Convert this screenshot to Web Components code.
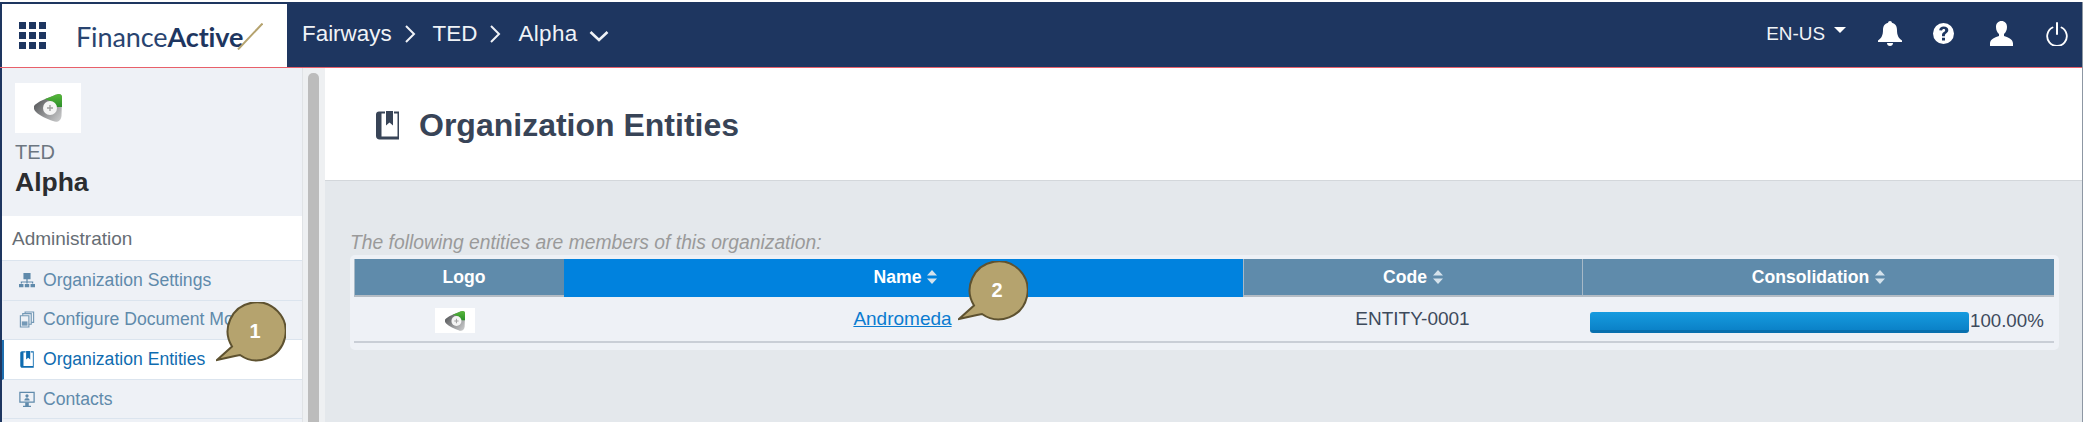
<!DOCTYPE html>
<html lang="en">
<head>
<meta charset="utf-8">
<title>Organization Entities</title>
<style>
    html, body { margin: 0; padding: 0; height: 422px; overflow: hidden; background: #fff; }
    body { font-family: "Liberation Sans", Arial, sans-serif; }
</style>
</head>
<body>
<fa-app></fa-app>
<script>
// builds an open shadow root from a style + markup string
function shadow(el, css, html) {
    el.attachShadow({ mode: 'open' });
    el.shadowRoot.innerHTML = `<style>${css}</style>${html}`;
}

const ICONS = {
    book: `<svg viewBox="0 0 23 29" width="100%" height="100%"><path fill="currentColor" d="M3 .5h6v2H5.500v23H21.500V2.500H18V.5h5v28H3.500C1.500 28.500 0 27 0 25V3.500C0 1.800 1.300.5 3 .5z"/><path fill="currentColor" d="M10 0h7v14.500l-3.500-3-3.500 3z"/></svg>`,
    sitemap: `<svg viewBox="0 0 18 17" width="100%" height="100%"><path fill="currentColor" d="M5 0h8v7H5zM8.300 7h1.400v2.500H16V12h-1.400v-1.200H9.700V12H8.300v-1.200H3.400V12H2V9.500h6.300zM0 12.500h5V16H0zM6.500 12.500h5V16h-5zM13 12.500h5V16h-5z"/></svg>`,
    copies: `<svg viewBox="0 0 16 18" width="100%" height="100%"><g fill="none" stroke="currentColor" stroke-width="1.200" opacity=".85"><path d="M1 5h9v12H1z"/><path d="M3.500 5V2.800h9V14H10"/><path d="M6 2.800V1h9v11h-2.500"/></g><path fill="currentColor" opacity=".85" d="M2.500 11h6v4.500h-6z"/></svg>`,
    screen: `<svg viewBox="0 0 18 18" width="100%" height="100%"><path fill="none" stroke="currentColor" stroke-width="1.400" d="M1 1h16v11H1z"/><path fill="currentColor" d="M7 16h4v-3.500H7zM4.500 16h9v1.500h-9zM6 10c0-2 1.200-2.500 3-2.500s3 .5 3 2.500zM9 3c1.100 0 1.800.8 1.800 1.900S10.100 7 9 7s-1.800-1-1.800-2.100S7.900 3 9 3z"/></svg>`
};

class FaLogoMark extends HTMLElement {
    constructor() {
        super();
        const id = 'g' + Math.random().toString(36).slice(2, 7);
        shadow(this, `
            :host { display: flex; align-items: center; justify-content: center; background: #fff; }
            svg { width: var(--mark, 28px); height: var(--mark, 28px); display: block; }
        `, `
            <svg viewBox="0 0 28 28">
                <defs>
                    <linearGradient id="${id}a" x1="0" y1="0" x2="0" y2="1"><stop offset="0" stop-color="#57b83a"/><stop offset="1" stop-color="#2d8f2b"/></linearGradient>
                    <linearGradient id="${id}b" x1="0" y1=".3" x2=".9" y2="1"><stop offset="0" stop-color="#555759"/><stop offset=".55" stop-color="#98999b"/><stop offset="1" stop-color="#c8c9ca"/></linearGradient>
                </defs>
                <path fill="url(#${id}b)" d="M25 0C28 0 28.500 3 28 6L27.500 22C27 27 23 29 19 27 13 25 6 22 2 18-1 15-1 12 2 10 7 6 14 4 20 1.500 22 .5 24 0 25 0z"/>
                <path fill="url(#${id}a)" d="M25 0C28 0 28.500 3 28 6V13H23C22 9 17 6.500 10.500 5.300 14 4 17 3 20 1.500 22 .5 24 0 25 0z"/>
                <circle cx="16" cy="14" r="7" fill="#f4f4f4"/>
                <path fill="#a0a0a0" d="M15.300 11h1.400v2.300H19v1.400h-2.300V17h-1.400v-2.300H13v-1.400h2.300z"/>
            </svg>
        `);
    }
}

class FaTopbar extends HTMLElement {
    constructor() {
        super();
        shadow(this, `
            :host { display: flex; height: 65px; background: #1e3660; border-bottom: 1px solid #e8606a; color: #f0f3f7; box-sizing: content-box; }
            .brand { width: 285px; margin: 2px 0 0 2px; background: #fff; display: flex; align-items: center; flex: none; padding-left: 17px; box-sizing: border-box; }
            .apps { display: grid; grid-template-columns: repeat(3, 7px); grid-auto-rows: 7px; gap: 3px; margin-right: 30px; }
            .apps i { background: #1e3660; }
            .word { position: relative; font: 400 27px "Lato", sans-serif; color: #294470; letter-spacing: -.1px; margin-top: 1px; }
            .word b { font-weight: 700; color: #1e3660; }
            .word svg { position: absolute; left: 161px; top: 3px; width: 26px; height: 27px; }
            .crumbs { display: flex; align-items: center; font-size: 22.400px; margin-left: 15px; flex: 1; padding-bottom: 2px; }
            .crumbs svg { display: block; }
            .sep { margin: 0 17px 0 12px; }
            .tools { display: flex; align-items: center; margin-right: 14px; padding-bottom: 2px; }
            .lang { font-size: 18.900px; margin-right: 9px; }
            .tools svg { display: block; fill: #fff; }
        `, `
            <div class="brand">
                <div class="apps"><i></i><i></i><i></i><i></i><i></i><i></i><i></i><i></i><i></i></div>
                <div class="word">Finance<b>Active</b><svg viewBox="0 0 26 27"><path d="M1 26.500L25.500.5" stroke="#b5a36e" stroke-width="2" fill="none"/></svg></div>
            </div>
            <nav class="crumbs">
                <span>Fairways</span>
                <svg class="sep" width="12" height="18" viewBox="0 0 12 18"><path d="M2 1l8 8-8 8" fill="none" stroke="#f0f3f7" stroke-width="2"/></svg>
                <span>TED</span>
                <svg class="sep" width="12" height="18" viewBox="0 0 12 18"><path d="M2 1l8 8-8 8" fill="none" stroke="#f0f3f7" stroke-width="2"/></svg>
                <span style="letter-spacing:.4px">Alpha</span>
                <svg style="margin:4px 0 0 11px" width="20" height="12" viewBox="0 0 20 12"><path d="M1.500 2L10 10l8.500-8" fill="none" stroke="#f0f3f7" stroke-width="2.600"/></svg>
            </nav>
            <div class="tools">
                <span class="lang">EN-US</span>
                <svg style="margin:-7px 32px 0 0" width="12" height="6" viewBox="0 0 12 6"><path d="M0 0h12L6 6z"/></svg>
                <svg style="margin-right:31px" width="24" height="25" viewBox="0 0 24 25"><path d="M12 0c1.100 0 1.900.8 1.900 1.800 3.500.8 5.100 3.700 5.100 7.200 0 5 1.300 8 5 10.500v1.500H0v-1.500C3.700 17 5 14 5 9c0-3.500 1.600-6.400 5.100-7.200C10.100.8 10.900 0 12 0zM9 22h6c0 1.700-1.300 3-3 3s-3-1.300-3-3z"/></svg>
                <svg style="margin-right:36px" width="21" height="21" viewBox="0 0 21 21"><path fill-rule="evenodd" d="M10.500 0a10.500 10.500 0 1 1 0 21 10.500 10.500 0 0 1 0-21zM9 14.700v2.800h3v-2.800zM10.700 3.500c-2.600 0-4.200 1.200-4.500 3.700l2.800.4c.2-1.200.8-1.700 1.700-1.700.9 0 1.500.5 1.500 1.300 0 .7-.4 1.100-1.200 1.700C9.700 9.600 9 10.500 9 12.300v1h2.900v-.7c0-.9.300-1.300 1.200-2 1.200-.9 2.200-1.800 2.200-3.500 0-2.300-1.900-3.600-4.600-3.600z"/></svg>
                <svg style="margin-right:33px" width="23" height="25" viewBox="0 0 23 25"><path d="M11.500 0c3.300 0 5.500 2.500 5.500 6 0 3-1.200 5.500-3 7v2c3.500 1 9 3 9 7.500V25H0v-2.500C0 18 5.500 16 9 15v-2c-1.800-1.500-3-4-3-7 0-3.500 2.200-6 5.500-6z"/></svg>
                <svg width="22" height="24" viewBox="0 0 22 24"><path d="M11 1v11" fill="none" stroke="#fff" stroke-width="2" stroke-linecap="round"/><path d="M6.500 5.500a9.800 9.800 0 1 0 9 0" fill="none" stroke="#fff" stroke-width="1.800" stroke-linecap="round"/></svg>
            </div>
        `);
    }
}

class FaNavItem extends HTMLElement {
    static get observedAttributes() { return ['icon']; }
    constructor() {
        super();
        shadow(this, `
            :host { display: flex; align-items: center; height: 38.600px; border-bottom: 1px solid #dbe4ee; color: #5f8aab; font-size: 17.600px; white-space: nowrap; overflow: hidden; box-sizing: content-box; border-left: 2px solid transparent; }
            :host([active]) { background: #fff; color: #0f6cb0; border-left-color: #1f6fb0; }
            .ico { width: 16px; height: 17px; margin: 0 8px 0 15px; flex: none; }
        `, `<span class="ico"></span><slot></slot>`);
    }
    attributeChangedCallback(name, old, value) {
        this.shadowRoot.querySelector('.ico').innerHTML = ICONS[value] || '';
    }
}

class FaSidebar extends HTMLElement {
    constructor() {
        super();
        shadow(this, `
            :host { display: block; width: 300px; background: #eef1f6; flex: none; overflow: hidden; }
            fa-logo-mark { width: 66px; height: 50px; margin: 15px 0 0 13px; }
            .org { margin: 8px 0 18px 13px; }
            .ted { font-size: 20px; line-height: 23px; color: #6c7680; }
            .alpha { font-size: 26.500px; line-height: 34px; font-weight: 700; color: #2b2d30; padding-top: 1px; margin-bottom: -1px; }
            .section { height: 44px; background: #fff; border-bottom: 1px solid #dbe4ee; line-height: 45px; font-size: 19px; padding-left: 10px; color: #666d74; }
        `, `
            <fa-logo-mark></fa-logo-mark>
            <div class="org"><div class="ted">TED</div><div class="alpha">Alpha</div></div>
            <div class="section">Administration</div>
            <slot></slot>
        `);
    }
}

class FaScrollbar extends HTMLElement {
    constructor() {
        super();
        shadow(this, `
            :host { display: block; width: 23px; flex: none; background: #eef0f2; padding: 5px 7px 0 5px; box-sizing: border-box; border-left: 1px solid #e0e3e6; }
            .thumb { width: 11px; height: 100%; background: #bcbcbc; border-radius: 5px 5px 0 0; }
        `, `<div class="thumb"></div>`);
    }
}

class FaPageHeader extends HTMLElement {
    constructor() {
        super();
        shadow(this, `
            :host { display: flex; align-items: center; height: 112px; background: #fff; border-bottom: 1px solid #d3d7db; padding-left: 51px; color: #384457; }
            .ico { width: 23px; height: 29px; margin-right: 20px; margin-top: 2px; }
            h1 { margin: 2px 0 0; font-size: 32px; font-weight: 700; line-height: 38px; }
        `, `<span class="ico">${ICONS.book}</span><h1><slot></slot></h1>`);
    }
}

class FaSortHead extends HTMLElement {
    constructor() {
        super();
        shadow(this, `
            :host { display: flex; align-items: center; justify-content: center; gap: 6px; background: #5f8bab; color: #fff; font-size: 17.600px; font-weight: 700; border-left: 1px solid #a7b9c7; border-bottom: 2px solid #b4bcc4; box-sizing: border-box; height: 38px; }
            :host([active]) { background: #0082de; border-bottom-color: #0082de; border-left-color: #0082de; padding-left: 3px; }
            svg { display: block; }
        `, `<slot></slot><svg width="10" height="14" viewBox="0 0 10 14"><path fill="#d4e2ec" d="M5 0l5 5.500H0zM0 8.500h10L5 14z"/></svg>`);
    }
}

class FaPlainHead extends FaSortHead {
    constructor() {
        super();
        this.shadowRoot.querySelector('svg').remove();
        this.style.paddingLeft = '9px';
    }
}

class FaProgress extends HTMLElement {
    constructor() {
        super();
        shadow(this, `
            :host { display: flex; align-items: flex-start; padding: 15px 0 0 8px; color: #3d4a5c; font-size: 18.700px; }
            .bar { width: 379px; height: 21px; border-radius: 3px; flex: none; background: linear-gradient(#169bdf, #0b82c8 85%, #0870ae 85%); }
            span { margin: -2px 0 0 1px; line-height: 22px; }
        `, `<div class="bar"></div><span><slot></slot></span>`);
    }
}

class FaEntities extends HTMLElement {
    constructor() {
        super();
        shadow(this, `
            :host { display: block; background: #eef1f6; border-radius: 5px; padding: 4px 5px 7px 4px; margin-right: 23px; }
            .grid { display: grid; grid-template-columns: 210px 679px 339px 472px; }
            .cell { height: 44px; background: #eef1f6; border-bottom: 2px solid #c9ced6; display: flex; align-items: center; justify-content: center; font-size: 19px; color: #3d4a5c; }
            .cell.top { display: block; }
            fa-logo-mark { width: 40px; height: 25px; --mark: 20px; margin: 3px 8px 0 0; }
            a { color: #0a7bd0; text-decoration: underline; margin-right: 2px; }
        `, `
            <div class="grid">
                <fa-plain-head>Logo</fa-plain-head>
                <fa-sort-head active>Name</fa-sort-head>
                <fa-sort-head>Code</fa-sort-head>
                <fa-sort-head>Consolidation</fa-sort-head>
                <div class="cell"><fa-logo-mark></fa-logo-mark></div>
                <div class="cell"><a href="#">Andromeda</a></div>
                <div class="cell">ENTITY-0001</div>
                <div class="cell top"><fa-progress>100.00%</fa-progress></div>
            </div>
        `);
    }
}

class FaCallout extends HTMLElement {
    constructor() {
        super();
        shadow(this, `
            :host { position: absolute; display: block; width: 70px; height: 62px; }
            svg { position: absolute; inset: 0; }
            span { position: absolute; left: 8px; right: 0; top: 0; height: 59px; display: flex; align-items: center; justify-content: center; color: #fff; font: 700 20px "Liberation Sans", sans-serif; }
        `, `
            <svg width="70" height="62" viewBox="0 0 70 62"><path d="M16 43.500A29 29 0 1 1 24 52l-5 1-18 4z" fill="#b5a36e" stroke="#5e5230" stroke-width="2" transform="translate(0 1)"/></svg>
            <span><slot></slot></span>
        `);
    }
}

class FaApp extends HTMLElement {
    constructor() {
        super();
        shadow(this, `
            :host { display: block; position: relative; height: 420px; margin-top: 2px; overflow: hidden; box-sizing: border-box; border-right: 1px solid #8d97a3; font-family: "Liberation Sans", Arial, sans-serif; }
            .below { display: flex; height: 354px; border-left: 2px solid #1e3660; }
            main { flex: 1; min-width: 0; background: #e4e8ec; }
            .content { padding: 51px 0 0 25px; }
            .intro { font-size: 19.300px; line-height: 22px; font-style: italic; color: #9a9a9a; margin-bottom: 1px; }
            .c1 { left: 216px; top: 300px; }
            .c2 { left: 958px; top: 259px; }
        `, `
            <fa-topbar></fa-topbar>
            <div class="below">
                <fa-sidebar>
                    <fa-nav-item icon="sitemap">Organization Settings</fa-nav-item>
                    <fa-nav-item icon="copies">Configure Document Models</fa-nav-item>
                    <fa-nav-item icon="book" active>Organization Entities</fa-nav-item>
                    <fa-nav-item icon="screen">Contacts</fa-nav-item>
                </fa-sidebar>
                <fa-scrollbar></fa-scrollbar>
                <main>
                    <fa-page-header>Organization Entities</fa-page-header>
                    <div class="content">
                        <div class="intro">The following entities are members of this organization:</div>
                        <fa-entities></fa-entities>
                    </div>
                </main>
            </div>
            <fa-callout class="c1">1</fa-callout>
            <fa-callout class="c2">2</fa-callout>
        `);
    }
}

customElements.define('fa-logo-mark', FaLogoMark);
customElements.define('fa-topbar', FaTopbar);
customElements.define('fa-nav-item', FaNavItem);
customElements.define('fa-sidebar', FaSidebar);
customElements.define('fa-scrollbar', FaScrollbar);
customElements.define('fa-page-header', FaPageHeader);
customElements.define('fa-sort-head', FaSortHead);
customElements.define('fa-plain-head', FaPlainHead);
customElements.define('fa-progress', FaProgress);
customElements.define('fa-entities', FaEntities);
customElements.define('fa-callout', FaCallout);
customElements.define('fa-app', FaApp);
</script>
</body>
</html>
